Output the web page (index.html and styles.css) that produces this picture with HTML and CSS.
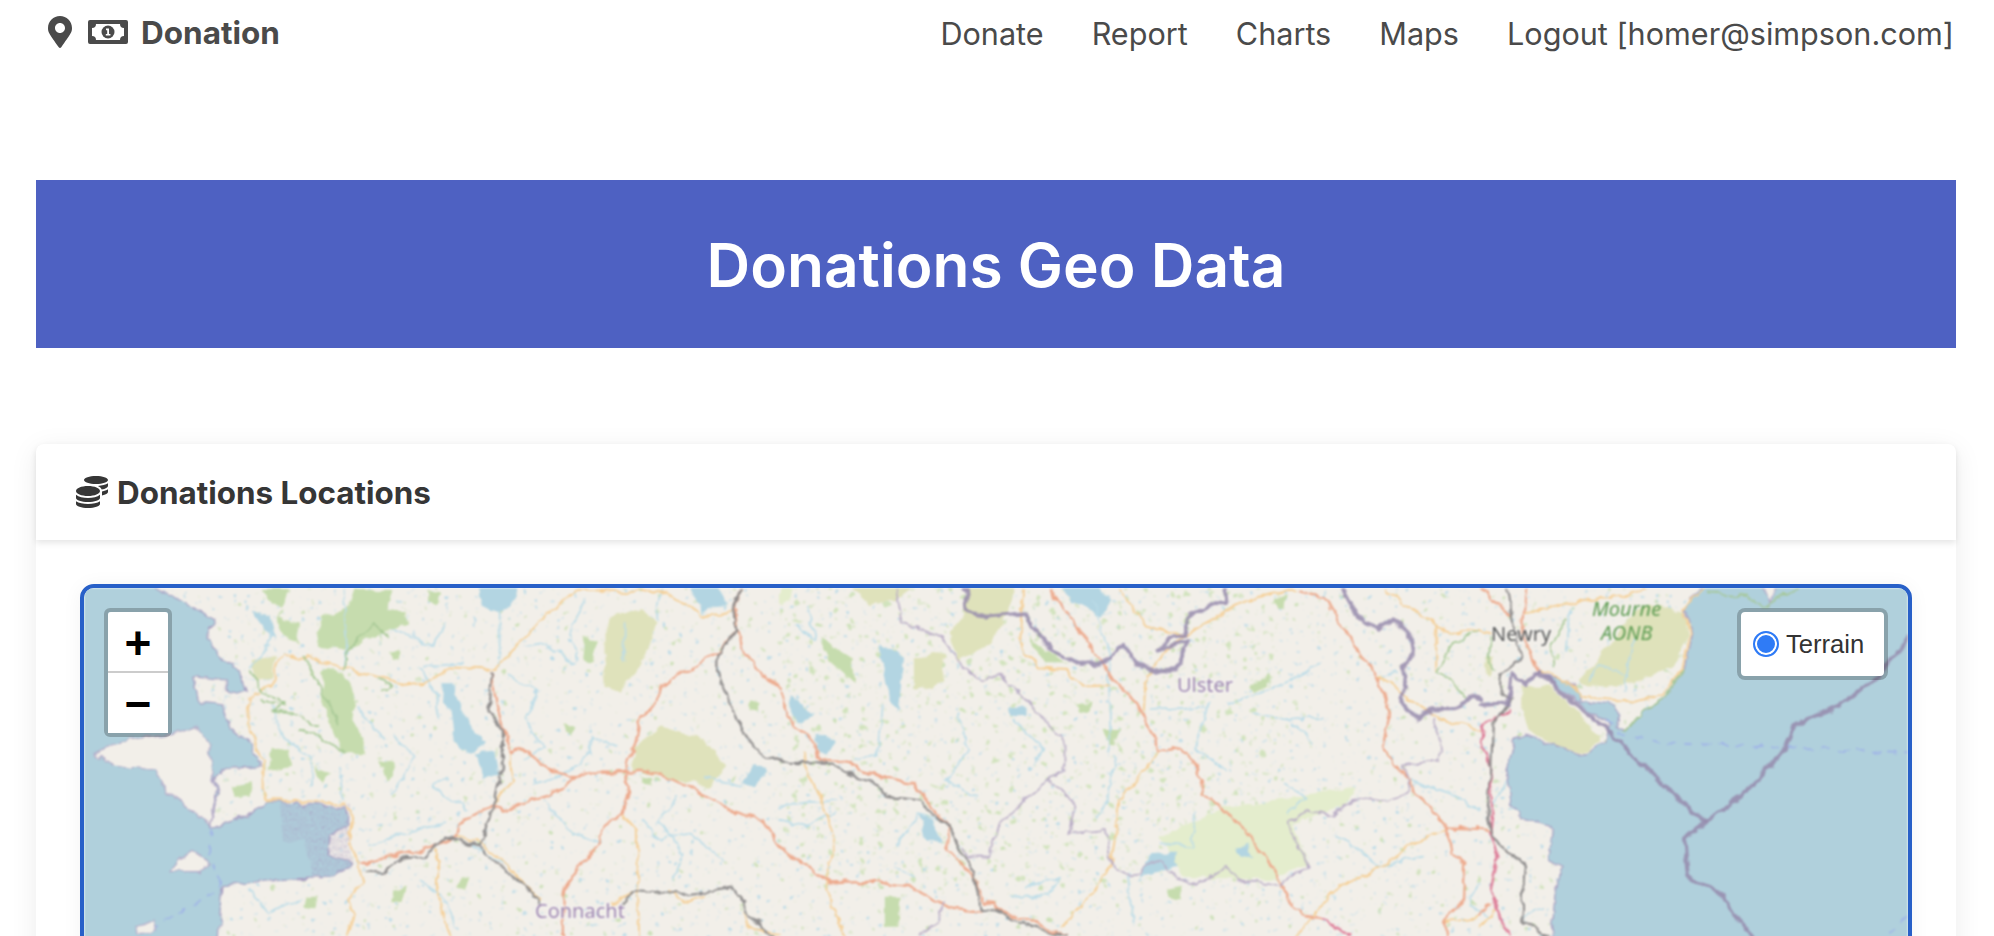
FILE: index.html
```html
<!DOCTYPE html>
<html lang="en">
<head>
<meta charset="utf-8">
<title>Donations Geo Data</title>
<link rel="stylesheet" href="styles.css">
</head>
<body>
<nav class="navbar">
  <a class="brand" href="#">
    <svg class="icon-pin" viewBox="0 0 384 512"><path d="M172.268 501.67C26.97 291.031 0 268.413 0 192 0 85.961 85.961 0 192 0s192 85.961 192 192c0 76.413-26.97 99.031-172.268 309.67-9.535 13.774-29.93 13.773-39.464 0zM192 272c44.183 0 80-35.817 80-80s-35.817-80-80-80-80 35.817-80 80 35.817 80 80 80z"/></svg>
    <svg class="icon-bill" viewBox="0 0 40 24"><path fill-rule="evenodd" d="M2 0H38A2 2 0 0 1 40 2V22A2 2 0 0 1 38 24H2A2 2 0 0 1 0 22V2A2 2 0 0 1 2 0ZM8 4A4 4 0 0 1 4 8V16A4 4 0 0 1 8 20H32A4 4 0 0 1 36 16V8A4 4 0 0 1 32 4Z"/><circle cx="20" cy="12" r="6.5"/><path class="bill-one" d="M18 8.4h3v5.6h1.4v1.6h-4.6v-1.6h1.4v-3.8h-1.2z"/></svg>
    <span>Donation</span>
  </a>
  <div class="nav-links">
    <a href="#">Donate</a>
    <a href="#">Report</a>
    <a href="#">Charts</a>
    <a href="#">Maps</a>
    <a href="#">Logout [homer@simpson.com]</a>
  </div>
</nav>
<main class="content">
  <section class="banner"><h1>Donations Geo Data</h1></section>
  <section class="card">
    <header class="card-header">
      <svg class="icon-coins" viewBox="0 0 512 512"><path d="M0 405.3V448c0 35.3 86 64 192 64s192-28.7 192-64v-42.7C342.7 434.4 267.2 448 192 448S41.3 434.4 0 405.3zM320 128c106 0 192-28.7 192-64S426 0 320 0 128 28.7 128 64s86 64 192 64zM0 300.4V352c0 35.3 86 64 192 64s192-28.7 192-64v-51.6c-41.3 34-116.9 51.6-192 51.6S41.3 334.4 0 300.4zm416 11c57.3-11.1 96-31.7 96-55.4v-42.7c-23.2 16.4-57.3 27.6-96 34.5v63.6zM192 160C86 160 0 195.8 0 240s86 80 192 80 192-35.8 192-80-86-80-192-80zm219.3 56.3c60-10.8 100.7-32 100.7-56.3v-42.7c-35.5 25.1-96.5 38.6-160.7 41.8 29.5 14.3 51.2 33.5 60 57.2z"/></svg>
      <h2>Donations Locations</h2>
    </header>
    <div class="card-body">
      <div class="map">
        <svg class="map-art" viewBox="84 588 1824 520" preserveAspectRatio="none">
          <defs>
            <filter id="wiggle" filterUnits="userSpaceOnUse" x="64" y="568" width="1864" height="560" color-interpolation-filters="sRGB">
              <feTurbulence type="fractalNoise" baseFrequency=".07" numOctaves="3" seed="4" result="n"/>
              <feDisplacementMap in="SourceGraphic" in2="n" scale="9" xChannelSelector="R" yChannelSelector="G"/>
            </filter>
            <filter id="spk-green" filterUnits="userSpaceOnUse" x="84" y="588" width="1824" height="520" color-interpolation-filters="sRGB">
              <feTurbulence type="fractalNoise" baseFrequency=".13" numOctaves="2" seed="7"/>
              <feColorMatrix type="matrix" values="0 0 0 0 .80  0 0 0 0 .88  0 0 0 0 .72  9 0 0 0 -6.35"/>
            </filter>
            <filter id="spk-blue" filterUnits="userSpaceOnUse" x="84" y="588" width="1824" height="520" color-interpolation-filters="sRGB">
              <feTurbulence type="fractalNoise" baseFrequency=".18" numOctaves="2" seed="19"/>
              <feColorMatrix type="matrix" values="0 0 0 0 .74  0 0 0 0 .86  0 0 0 0 .91  0 8 0 0 -5.5"/>
            </filter>
            <filter id="spk-dense" filterUnits="userSpaceOnUse" x="780" y="588" width="500" height="300" color-interpolation-filters="sRGB">
              <feTurbulence type="fractalNoise" baseFrequency=".12" numOctaves="2" seed="31"/>
              <feColorMatrix type="matrix" values="0 0 0 0 .82  0 0 0 0 .89  0 0 0 0 .74  9 0 0 0 -5.9"/>
            </filter>
            <pattern id="marsh" width="8" height="7" patternUnits="userSpaceOnUse">
              <rect class="marsh-dot" x="0" y="0" width="3" height="2"/><rect class="marsh-dot" x="4" y="3" width="2" height="2"/>
            </pattern>
          </defs>
          <rect class="land" x="84" y="588" width="1824" height="520"/>
          <rect class="land" x="84" y="588" width="1824" height="520" filter="url(#spk-green)"/>
          <rect class="land" x="84" y="588" width="1824" height="520" filter="url(#spk-blue)"/>
          <rect class="land" x="780" y="588" width="500" height="300" filter="url(#spk-dense)"/>

          <g filter="url(#wiggle)">
          <!-- west: coordinates are in the west crop's frame -->
          <g transform="translate(80 580) scale(.4464 .3333)">
            <g class="lime">
              <path d="M1175 150L1200 100 1260 85 1290 130 1260 240 1210 340 1175 320Z"/>
              <path d="M1240 500L1300 440 1400 480 1450 560 1410 620 1330 600 1240 570Z"/>
              <path d="M385 240L440 230 430 290 390 300Z"/>
            </g>
            <g class="forest">
              <path d="M530 200L540 110 600 80 620 30 700 30 690 90 730 90 735 130 680 160 630 190 590 210Z"/>
              <path d="M545 260L590 280 615 350 610 420 640 480 640 520 590 520 570 460 545 380Z"/>
              <path d="M430 500L470 510 475 560 420 570Z"/>
              <path d="M345 620L385 610 380 650 350 650Z"/>
              <path d="M1130 170L1160 180 1150 250 1125 240Z"/>
              <path d="M525 560L560 580 540 610Z"/>
              <path d="M670 540L710 550 690 600Z"/>
              <path d="M1080 430L1110 440 1100 470 1085 460Z"/>
              <path d="M510 950L530 950 525 985 505 980Z"/>
              <path d="M1500 360L1525 370 1520 395 1500 390Z"/>
              <path d="M1255 590L1285 595 1280 615 1255 610Z"/>
              <path d="M690 220L715 205 715 235 700 240Z"/>
              <path d="M410 30L470 30 450 80 415 60Z"/>
              <path d="M440 110L490 130 490 190 450 170Z"/>
              <path d="M780 30L810 40 800 70 780 60Z"/>
              <path d="M850 890L870 885 860 930 845 925Z"/>
              <path d="M700 930L730 920 720 970 695 960Z"/>
            </g>
            <g class="water">
              <path d="M810 310L835 310 850 370 880 450 910 490 880 515 840 490 830 390 810 350Z"/>
              <path d="M890 520L930 515 940 585 905 590Z"/>
              <path d="M890 0H990L965 90 935 100 900 75Z"/>
              <path d="M1360 0H1420L1450 70 1395 100 1380 60Z"/>
              <path d="M385 95L425 105 435 180 415 150Z"/>
              <path d="M1480 610L1510 550 1540 580 1510 620Z"/>
            </g>
            <g class="river">
              <polyline points="430,160 410,230 380,260"/><polyline points="590,30 600,190 590,260"/><polyline points="820,130 790,200 700,150"/><polyline points="940,100 940,260"/><polyline points="1000,200 1050,190 1090,240 1110,250"/><polyline points="1130,60 1100,130 1110,240"/><polyline points="430,380 460,480 520,530 520,620"/><polyline points="580,560 590,660"/><polyline points="700,470 750,530 700,640"/><polyline points="820,590 790,620 870,690"/><polyline points="1040,660 1100,760 1170,790"/><polyline points="1200,500 1150,470 1120,560 1020,610"/><polyline points="1260,720 1300,780 1370,760 1440,840"/><polyline points="380,930 420,1000 500,960"/><polyline points="760,900 820,960 840,1040"/><polyline points="880,800 960,860"/><polyline points="1480,620 1400,590"/><polyline points="860,250 770,260"/><polyline points="620,380 680,480"/><polyline points="1220,130 1220,240"/><polyline points="1300,30 1290,120"/><polyline points="1340,650 1300,720 1350,820 1330,900"/><polyline points="640,800 720,760 820,730"/><polyline points="960,280 1020,330 1000,420"/><polyline points="1000,430 1040,500 1000,540"/><polyline points="760,260 800,350 800,420"/>
            </g>
            <path class="sea" d="M-40 0H150L190 40 235 70 300 120 285 175 300 210 360 280 370 340 330 330 330 300 255 290 265 365 320 375 320 420 345 455 385 490 405 560 330 565 300 590 310 640 295 720 290 745 315 740 410 680 420 665 500 672 590 680 605 730 560 770 555 820 610 850 570 890 510 895 420 900 320 920 310 1100H-40Z"/>
            <path class="land-patch" d="M35 525L95 480 130 475 230 455 260 440 295 490 290 525 295 570 305 640 292 735 240 680 195 640 170 570 70 555Z"/>
            <path class="land-patch" d="M200 875L250 810 290 845 270 875Z"/>
            <path class="land-patch" d="M130 1040L165 1020 170 1050 135 1062Z"/>
            <rect class="marsh" x="450" y="672" width="155" height="110"/>
            <path class="marsh" d="M505 780H600L612 850 570 890 520 890Z"/>
            <g class="road-pale">
              <polyline points="930,270 980,200 1040,110 1110,35 1130,28 1230,40 1290,30 1340,60 1395,110 1460,95"/>
              <polyline points="930,270 830,262 790,300 725,315 660,290 590,265 510,228 490,240 455,220 440,260 430,315 375,360 380,450 410,540 408,600 415,660 590,668 612,710 605,790 625,850 632,905 600,960 615,1010 595,1068"/>
              <polyline points="960,520 970,600 945,640 925,680"/><polyline points="1218,700 1245,745 1248,920 1250,1068"/><polyline points="845,770 900,790 960,860 1030,960"/><polyline points="800,810 800,950 830,1068"/><polyline points="1250,930 1190,970"/><polyline points="1320,935 1350,965 1400,945"/><polyline points="1490,1000 1500,1045 1568,1060"/>
            </g>
            <g class="road-red">
              <polyline points="1480,30 1465,80 1470,150 1490,220 1530,290 1568,330"/>
              <polyline points="1470,150 1430,215 1370,265 1300,320 1290,370 1255,420 1245,480 1222,560 1228,640 1218,700 1175,740 1165,790 1120,860 1085,930 1078,1000 1080,1068"/>
              <polyline points="920,280 935,380 950,460 960,520 1000,510 1030,555 1110,595 1130,578 1190,578 1270,572 1330,600 1420,660 1450,690 1530,720 1568,800"/>
              <polyline points="1110,595 1060,640 990,670 950,695 920,680 850,730 845,770 780,805 690,830 630,850"/>
            </g>
            <g class="road-gray">
              <polyline points="1480,30 1460,90 1470,150 1430,220 1430,270 1470,420 1520,520 1568,545"/>
              <polyline points="920,280 915,400 945,450 945,560 930,660 910,740 895,800 820,770 775,830 720,835 680,880 640,870"/>
              <polyline points="895,800 930,850 1000,920 1030,970"/>
              <polyline points="1215,970 1245,930 1350,945 1460,920 1480,950 1500,1010 1550,1068"/>
            </g>
            <g class="green-line"><polyline points="380,270 410,340 460,370 430,395 480,400 530,440"/><polyline points="500,230 540,330 580,430"/><polyline points="590,270 600,210 660,130 690,170"/><polyline points="490,450 530,470 600,520"/><polyline points="670,300 700,320 680,335"/><polyline points="410,360 460,380 440,350"/></g>
            <polyline class="sea-dash" points="292,745 292,820 315,925 170,1040"/>
          </g>

          <!-- centre -->
          <g transform="translate(780 580) scale(.4464 .3333)">
            <g class="lime">
              <path d="M415 0H530L500 130 465 200 400 240 380 160 415 100Z"/>
              <path d="M300 235L370 220 360 310 300 330Z"/>
              <path d="M150 0H310L260 60 200 75Z"/>
            </g>
            <g class="meadow">
              <path d="M850 770L1000 680 1120 660 1180 640 1290 620 1270 680 1150 730 1180 850 1100 900 900 890Z"/>
              <path d="M0 20L30 30 10 80 0 80Z"/>
            </g>
            <g class="forest">
              <path d="M90 170L160 230 170 310 110 240Z"/>
              <path d="M560 170L640 250 590 250Z"/>
              <path d="M1050 320L1100 280 1090 320 1060 340Z"/>
              <path d="M235 950L270 950 265 1040 235 1040Z"/>
              <path d="M670 370L700 365 695 395 675 395Z"/>
              <path d="M870 930L900 920 895 955 875 955Z"/>
              <path d="M1110 50L1135 50 1130 80 1115 80Z"/>
              <path d="M720 450L760 450 745 500Z"/>
            </g>
            <g class="water">
              <path d="M220 190L280 235 270 330 262 395 240 320Z"/>
              <path d="M20 340L55 380 75 410 35 430Z"/>
              <path d="M80 460L130 490 100 525 80 510Z"/>
              <path d="M620 0H700L740 60 720 110 650 60Z"/>
              <path d="M805 890L840 815 885 815 890 860Z"/>
              <path d="M1020 800L1050 795 1060 830 1030 830Z"/>
              <path d="M515 385L550 380 550 410 525 412Z"/>
              <path d="M310 700L340 720 365 790 330 780Z"/>
            </g>
            <g class="river">
              <polyline points="30,130 80,180 60,80"/><polyline points="230,380 220,520 170,540"/><polyline points="130,660 0,680"/><polyline points="260,800 310,700 370,720"/><polyline points="300,890 260,860"/><polyline points="700,60 735,200 740,470 735,520"/><polyline points="750,530 740,630 710,720"/><polyline points="930,700 920,800 850,790"/><polyline points="1000,370 1100,330 1210,250"/><polyline points="960,370 930,500 1000,570"/><polyline points="1060,400 1140,420 1220,410"/><polyline points="1150,430 1190,490"/><polyline points="1140,700 1180,650 1130,610"/><polyline points="550,920 630,890 600,950 520,950"/><polyline points="1250,760 1340,860 1440,830"/><polyline points="1410,600 1500,640 1568,690"/><polyline points="1350,290 1380,280"/><polyline points="780,890 790,1030"/><polyline points="400,400 420,520 370,600 440,650"/><polyline points="520,420 590,500 570,560"/><polyline points="0,720 60,740 120,700"/><polyline points="830,390 950,380"/>
            </g>
            <g class="road-pale">
              <polyline points="60,520 55,555 100,680 125,790 100,900 145,1068"/>
              <polyline points="845,520 760,660 750,780 740,860 680,970 630,1040"/>
              <polyline points="545,30 535,200 580,265 640,270 680,320 740,315"/>
              <polyline points="815,390 820,285 900,170 1050,60 1150,30"/>
              <polyline points="760,30 820,140 900,165"/>
              <polyline points="1340,285 1400,350 1470,410 1568,450"/>
              <polyline points="1495,750 1420,790 1350,860 1250,920 1200,1000 1160,1068"/>
              <polyline points="1490,1025 1568,1010"/>
              <polyline points="1360,30 1420,90 1470,140 1510,160 1568,150"/><polyline points="1470,140 1470,270"/>
            </g>
            <g class="road-red">
              <polyline points="0,340 30,445 70,470 85,540 130,545 230,590 300,610 375,740 375,810 440,900 455,965 480,970 490,990 570,1030 640,1068"/>
              <polyline points="0,800 60,860 110,910 210,905 300,925 380,985 450,995"/>
              <polyline points="605,30 680,170 730,270 800,370 840,470 845,515 900,505 930,550 950,640 1030,730 1110,880 1150,980 1195,1015 1215,1015"/>
              <polyline points="1160,30 1220,50 1270,170 1340,290 1365,390 1350,500 1420,630 1495,745 1568,750"/>
              <polyline points="1495,745 1505,820 1535,850 1530,960 1490,1025 1495,1068"/>
            </g>
            <polyline class="road-pink" points="1215,1015 1280,1068"/>
            <g class="road-gray">
              <polyline points="0,545 100,548 190,600 220,610 235,650 310,660 375,740 435,880 450,990 490,995 560,1040 640,1068"/>
            </g>
            <polyline class="green-line" points="1568,150 1510,190 1470,275 1540,350"/>
            <g class="county">
              <polyline points="260,30 275,130 360,170 400,240 445,300 490,280 570,380 600,440 635,470 635,570 600,600 555,650 490,740 470,830 420,830 410,800"/>
              <polyline points="600,600 660,670 650,760 730,750 740,850 790,890 850,840 890,900 940,910 1000,860 1030,905 1120,915 1180,860 1140,730 1180,690 1240,710 1300,650 1360,665 1410,630 1395,560 1475,540 1480,480 1460,415"/>
              <polyline points="370,965 350,1030 310,1068"/>
            </g>
            <g class="border">
              <polyline points="415,0 420,90 460,110 550,100 570,150 610,210 670,255 720,250 770,195 800,255 860,280 890,260 915,180 850,210 870,170 905,165 915,110 965,70 1000,70 995,0"/>
              <polyline points="1250,0 1290,100 1340,150 1370,115 1415,170 1420,220 1395,260 1405,320 1390,355 1430,420 1460,385 1510,385 1550,350 1568,360"/>
            </g>
          </g>

          <!-- east -->
          <g transform="translate(1400 570) scale(.3788 .3333)">
            <g class="lime">
              <path d="M470 330L560 220 640 100 750 130 760 200 720 290 640 330 560 350 480 345Z"/>
              <path d="M320 350L400 350 470 430 530 510 490 550 410 530 340 480 320 420Z"/>
              <path d="M230 260L250 260 240 320 225 315Z"/>
            </g>
            <g class="river">
              <polyline points="440,240 450,120"/><polyline points="500,330 520,280 600,320"/><polyline points="590,360 620,200"/><polyline points="280,640 240,720"/><polyline points="370,700 290,720"/><polyline points="210,940 180,1000 230,1040"/><polyline points="380,1010 320,1040"/>
            </g>
            <path class="sea" d="M810 30H1420V1120H400L410 960 430 895 395 880 405 770 320 745 290 700 280 600 300 510 330 495 410 530 490 555 540 515 555 470 545 450 500 425 430 360 380 320 460 345 475 395 560 405 580 440 570 470 595 482 640 425 690 390 750 300 770 190 750 120Z"/>
            <path class="land-patch" d="M955 30H1005L975 100Z"/>
            <polyline class="green-line" points="810,70 900,75 960,110 1050,55"/>
            <polyline class="green-line" points="595,482 640,425 690,390 750,300"/>
            <g class="green-line"><polyline points="250,300 230,250 240,200"/><polyline points="440,150 400,220 405,290"/></g>
            <g class="road-pale">
              <polyline points="365,300 460,350 470,380 620,395 690,375 745,300 765,190 745,120 800,60"/>
              <polyline points="330,130 450,95 600,75 650,55"/>
              <polyline points="210,180 240,190"/>
              <polyline points="210,1070 250,1020"/>
            </g>
            <g class="road-red">
              <polyline points="210,55 290,135"/><polyline points="330,55 325,200 365,300"/>
              <polyline points="210,775 230,780"/><polyline points="210,1040 240,1000"/>
            </g>
            <polyline class="road-pink" points="290,420 220,460 215,520 240,580 245,690 235,790 260,860 240,960 270,1060 290,1098"/>
            <polyline class="road-gray" points="285,55 300,170 320,260 270,310 265,370 295,385 245,460 240,620 230,740 240,800 290,850 330,880 320,1050 390,1098"/>
            <g class="border">
              <polyline points="210,405 285,400 295,310 330,345 365,305"/>
              <polyline points="365,305 460,400 540,470 680,630 805,755 750,805 760,915 850,980 930,1098"/>
              <polyline points="805,755 900,680 1000,560 1050,460 1150,415 1260,320 1400,130"/>
            </g>
            <polyline class="sea-dash" points="545,450 590,495 700,520 1000,530 1340,550"/>
            <polyline class="sea-dash" points="1340,1040 1280,1098"/>
          </g>
          </g>

          <text class="label region" x="535" y="918">Connacht</text>
          <text class="label region" x="1177" y="692">Ulster</text>
          <text class="label town" x="1491" y="641">Newry</text>
          <text class="label park" x="1592" y="616">Mourne</text>
          <text class="label park" x="1601" y="640">AONB</text>
        </svg>
        <div class="zoom-ctl">
          <button class="zoom-btn zoom-in" type="button">+</button>
          <button class="zoom-btn" type="button">−</button>
        </div>
        <label class="layer-ctl">
          <input class="layer-radio" type="radio" name="layer" checked>
          <span>Terrain</span>
        </label>
      </div>
    </div>
  </section>
</main>
</body>
</html>
```
FILE: styles.css
```css
* { box-sizing: border-box; }
html, body { margin: 0; height: 936px; overflow: hidden; background: #fff; }
body { font-family: Inter, "Liberation Sans", sans-serif; color: #4a4a4a; }
a { color: inherit; text-decoration: none; }

.navbar { height: 64px; display: flex; align-items: center; justify-content: space-between; padding: 0 40px 0 48px; }
.brand { display: flex; align-items: center; font-size: 31.5px; font-weight: 700; }
.brand svg { fill: #4a4a4a; display: block; }
.icon-pin { width: 24px; height: 32px; margin-right: 16px; }
.icon-bill { width: 40px; height: 24px; margin-right: 13px; }
.bill-one { fill: #fff; }
.nav-links { display: flex; gap: 48px; padding-top: 2px; font-size: 30.6px; font-weight: 400; }

.content { padding: 116px 38px 0 36px; }
.banner { height: 168px; padding-top: 2px; background: #4e61c2; display: flex; align-items: center; justify-content: center; }
.banner h1 { margin: 0; color: #fff; font-size: 60.4px; font-weight: 600; }

.card { margin-top: 96px; background: #fff; border-radius: 8px 8px 0 0; box-shadow: 0 6px 28px rgba(0,0,0,.08); }
.card-header { height: 96px; display: flex; align-items: center; padding-left: 40px; border-radius: 8px 8px 0 0; box-shadow: 0 3px 6px rgba(0,0,0,.1); }
.icon-coins { width: 32px; height: 32px; fill: #363636; margin-right: 9px; }
.card-header h2 { margin: 2px 0 0; font-size: 31.4px; font-weight: 700; color: #363636; }
.card-body { padding: 44px; }

.map { position: relative; height: 528px; border: 4px solid #2860c8; border-radius: 14px; overflow: hidden; box-shadow: 0 2px 20px rgba(0,0,0,.05); }
.map-art { display: block; width: 100%; height: 100%; filter: blur(.8px); }

.land, .land-patch { fill: #f2efe9; }
.land-patch { stroke: #b3a8c6; stroke-width: 1.2; vector-effect: non-scaling-stroke; }
.sea { fill: #b0d0dc; stroke: #a79ec0; stroke-width: 1.2; vector-effect: non-scaling-stroke; }
.water { fill: #b3d5e2; }
.lime { fill: #dfe2bb; }
.forest { fill: #c6dcae; }
.meadow { fill: #e4edcd; }
.marsh { fill: url(#marsh); }
.marsh-dot { fill: #a494bd; }
polyline { fill: none; stroke-linejoin: round; stroke-linecap: round; vector-effect: non-scaling-stroke; }
.river polyline { stroke: #bcdce8; stroke-width: 1.6; vector-effect: non-scaling-stroke; }
.road-pale polyline { stroke: #f5cf96; stroke-width: 1.8; vector-effect: non-scaling-stroke; }
.road-red polyline { stroke: #eda98c; stroke-width: 2.2; vector-effect: non-scaling-stroke; }
.road-pink { stroke: #dd7d98; stroke-width: 2.2; }
.road-gray polyline, polyline.road-gray { stroke: #8e8c8c; stroke-width: 2.2; vector-effect: non-scaling-stroke; }
.green-line, .green-line polyline { stroke: #a5c794; stroke-width: 1.6; fill: none; vector-effect: non-scaling-stroke; }
.county polyline { stroke: #b9adc6; stroke-width: 1.6; vector-effect: non-scaling-stroke; }
.border polyline { stroke: #9589ac; stroke-width: 4; stroke-opacity: .85; vector-effect: non-scaling-stroke; }
.sea-dash { stroke: #9fb3e8; stroke-width: 1.6; stroke-dasharray: 8 9; }

.label { font-family: "Noto Sans", "Liberation Sans", sans-serif; font-size: 20px; paint-order: stroke; stroke: rgba(255,255,255,.55); stroke-width: 2px; }
.region { fill: #9a82ad; }
.town { fill: #555; }
.park { font-style: italic; fill: #5d9c52; stroke: none; }

.zoom-ctl { position: absolute; left: 20px; top: 20px; width: 68px; border: 4px solid rgba(0,0,0,.22); border-radius: 6px; background-clip: padding-box; display: flex; flex-direction: column; }
.zoom-btn { height: 60px; border: 0; padding: 2px 0 0; background: #fff; color: #000; font-family: "Liberation Sans", sans-serif; font-size: 46px; font-weight: 700; line-height: 58px; }
.zoom-in { height: 61px; border-bottom: 2px solid #ccc; border-radius: 3px 3px 0 0; }

.layer-ctl { position: absolute; right: 20px; top: 20px; width: 151px; height: 72px; border: 4px solid rgba(0,0,0,.22); border-radius: 8px; background: #fff; background-clip: padding-box; display: flex; align-items: center; padding-left: 12px; gap: 7px; font-family: "Liberation Sans", sans-serif; font-size: 25.6px; color: #333; }
.layer-radio { appearance: none; margin: 0; width: 26px; height: 26px; border-radius: 50%; border: 2px solid #2f7bf6; background: #2f7bf6; box-shadow: inset 0 0 0 2px #fff; }
```
